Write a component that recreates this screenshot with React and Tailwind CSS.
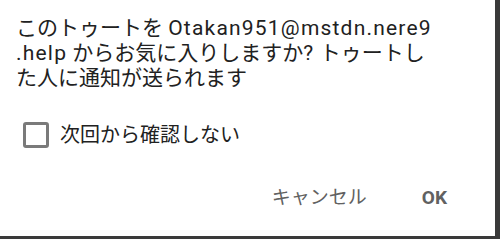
export default function App() {
  const font = { fontFamily: 'Roboto, "Noto Sans CJK JP", sans-serif' };
  return (
    <div className="w-[500px] h-[239px] bg-[#3a3a3a] overflow-hidden" style={font}>
      <div className="w-[495px] h-[236px] bg-white flex flex-col">
        <div className="pt-4 pl-4 text-[21px] leading-[25px] text-[#212121]">
          <div className="whitespace-nowrap">
            このトゥートを <span className="tracking-[1.2px]">Otakan951@mstdn.nere9</span>
          </div>
          <div className="whitespace-nowrap">
            <span className="tracking-[1.2px]">.help</span> からお気に入りしますか<span className="tracking-[1.2px]">?</span> トゥートし
          </div>
          <div className="whitespace-nowrap">た人に通知が送られます</div>
        </div>
        <label className="mt-[31px] ml-[23px] flex items-center gap-[11px]">
          <span className="w-[26px] h-[26px] border-[3px] border-[#7a7a7a] rounded-[3px]" />
          <span className="text-[20px] leading-[26px] text-[#212121]">次回から確認しない</span>
        </label>
        <div className="mt-[36px] flex justify-end items-center pr-[48px] text-[19px] text-[#616161]">
          <span>キャンセル</span>
          <span className="ml-[55px] font-bold">OK</span>
        </div>
      </div>
    </div>
  );
}
